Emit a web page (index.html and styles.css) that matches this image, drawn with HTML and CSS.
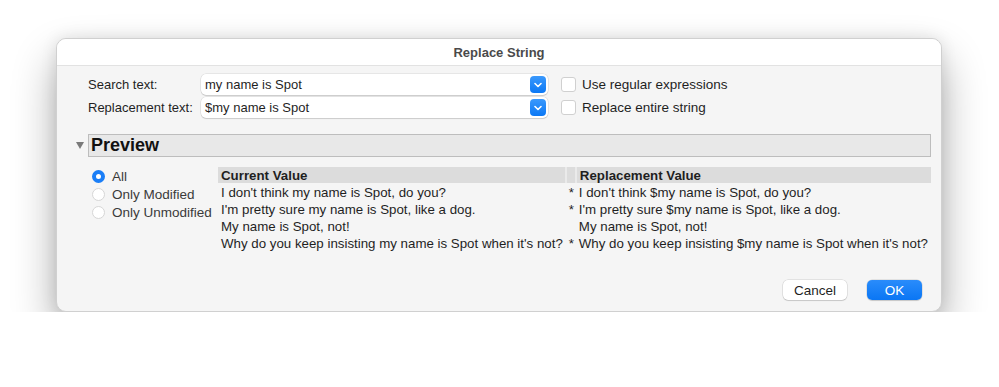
FILE: index.html
```html
<!DOCTYPE html>
<html lang="en">
<head>
    <meta charset="UTF-8">
    <title>Replace String</title>
    <link rel="stylesheet" href="styles.css">
</head>
<body>
    <div class="window">
        <div class="titlebar">Replace String</div>

        <div class="content">
            <div class="fields">
                <div class="field-row">
                    <label class="field-label">Search text:</label>
                    <div class="combo">
                        <span class="combo-text">my name is Spot</span>
                        <span class="combo-btn">
                            <svg width="8" height="6" viewBox="0 0 8 6"><path d="M1 1.5 L4 4.5 L7 1.5" fill="none" stroke="#fff" stroke-width="1.6" stroke-linecap="round" stroke-linejoin="round"/></svg>
                        </span>
                    </div>
                    <div class="check">
                        <span class="check-box"></span>
                        <span>Use regular expressions</span>
                    </div>
                </div>
                <div class="field-row">
                    <label class="field-label">Replacement text:</label>
                    <div class="combo">
                        <span class="combo-text">$my name is Spot</span>
                        <span class="combo-btn">
                            <svg width="8" height="6" viewBox="0 0 8 6"><path d="M1 1.5 L4 4.5 L7 1.5" fill="none" stroke="#fff" stroke-width="1.6" stroke-linecap="round" stroke-linejoin="round"/></svg>
                        </span>
                    </div>
                    <div class="check">
                        <span class="check-box"></span>
                        <span>Replace entire string</span>
                    </div>
                </div>
            </div>

            <div class="section-head">
                <span class="disclosure"></span>
                <div class="section-title">Preview</div>
            </div>

            <div class="preview">
                <div class="filters">
                    <div class="radio-row"><span class="radio selected"></span>All</div>
                    <div class="radio-row"><span class="radio"></span>Only Modified</div>
                    <div class="radio-row"><span class="radio"></span>Only Unmodified</div>
                </div>

                <table class="values">
                    <thead>
                        <tr>
                            <th class="col-current">Current Value</th>
                            <th class="col-mark"></th>
                            <th class="col-new">Replacement Value</th>
                        </tr>
                    </thead>
                    <tbody>
                        <tr>
                            <td>I don't think my name is Spot, do you?</td>
                            <td class="mark">*</td>
                            <td>I don't think $my name is Spot, do you?</td>
                        </tr>
                        <tr>
                            <td>I'm pretty sure my name is Spot, like a dog.</td>
                            <td class="mark">*</td>
                            <td>I'm pretty sure $my name is Spot, like a dog.</td>
                        </tr>
                        <tr>
                            <td>My name is Spot, not!</td>
                            <td class="mark"></td>
                            <td>My name is Spot, not!</td>
                        </tr>
                        <tr>
                            <td>Why do you keep insisting my name is Spot when it's not?</td>
                            <td class="mark">*</td>
                            <td>Why do you keep insisting $my name is Spot when it's not?</td>
                        </tr>
                    </tbody>
                </table>
            </div>

            <div class="buttons">
                <button class="btn">Cancel</button>
                <button class="btn primary">OK</button>
            </div>
        </div>
    </div>
</body>
</html>
```

FILE: styles.css
```css
body {
    margin: 0;
    padding: 38px 0 0 56px;
    background-color: #FFFFFF;
    font-family: "Liberation Sans", Arial, sans-serif;
    font-size: 13px;
    color: #1F1F1F;
}

.window {
    width: 886px;
    height: 274px;
    box-sizing: border-box;
    background-color: #F5F5F5;
    border: 1px solid #D0D0D0;
    border-radius: 10px;
    box-shadow: 0 22px 44px rgba(0, 0, 0, 0.32), 0 0 16px rgba(0, 0, 0, 0.1);
    overflow: hidden;
    display: flex;
    flex-direction: column;
}

.titlebar {
    height: 26px;
    line-height: 27px;
    background-color: #FFFFFF;
    border-bottom: 1px solid #E2E2E2;
    text-align: center;
    font-weight: bold;
    color: #4A4A4A;
}

.content {
    flex: 1;
    display: flex;
    flex-direction: column;
    padding: 8px 10px 11px 19px;
}

.fields {
    display: flex;
    flex-direction: column;
    gap: 2px;
    padding-left: 12px;
}

.field-row {
    display: flex;
    align-items: center;
    height: 21px;
}

.field-label {
    width: 113px;
}

.combo {
    width: 347px;
    height: 21px;
    box-sizing: border-box;
    background-color: #FFFFFF;
    border-radius: 5px;
    box-shadow: 0 0 0 0.5px rgba(0, 0, 0, 0.12), 0 1px 1px rgba(0, 0, 0, 0.12);
    display: flex;
    align-items: center;
    justify-content: space-between;
    padding: 0 2px 0 4px;
}

.combo-btn {
    width: 16px;
    height: 17px;
    background: linear-gradient(#3B99FC, #0B78F5);
    border-radius: 4px;
    display: flex;
    align-items: center;
    justify-content: center;
}

.check {
    display: flex;
    align-items: center;
    gap: 6px;
    margin-left: 13px;
    font-size: 13.5px;
}

.check-box {
    width: 13px;
    height: 13px;
    background-color: #FFFFFF;
    border: 1px solid #D0D0D0;
    border-radius: 3px;
}

.section-head {
    display: flex;
    align-items: center;
    margin-top: 16px;
}

.disclosure {
    width: 0;
    height: 0;
    border-left: 4.5px solid transparent;
    border-right: 4.5px solid transparent;
    border-top: 7px solid #7A7A7A;
    margin-right: 4px;
}

.section-title {
    flex: 1;
    height: 21px;
    line-height: 21px;
    background-color: #E8E8E8;
    border: 1px solid #BDBDBD;
    padding-left: 2px;
    font-size: 18px;
    font-weight: bold;
    color: #111111;
}

.preview {
    display: flex;
    margin-top: 10px;
    padding-left: 16px;
}

.filters {
    flex: 0 0 126px;
    display: flex;
    flex-direction: column;
    gap: 5px;
    padding-top: 3px;
    white-space: nowrap;
}

.radio-row {
    display: flex;
    align-items: center;
    gap: 7px;
    height: 13px;
    font-size: 13.5px;
    color: #3A3A3A;
}

.radio {
    flex: none;
    width: 13px;
    height: 13px;
    box-sizing: border-box;
    border-radius: 50%;
    background-color: #FFFFFF;
    border: 1px solid #D6D6D6;
}

.radio.selected {
    border: 4px solid #1A7EF7;
    background-color: #FFFFFF;
}

.values {
    flex: 1;
    border-collapse: collapse;
    font-size: 13.3px;
}

.values th {
    height: 16px;
    padding: 0 3px;
    background-color: #DCDCDC;
    border-right: 2px solid #EAEAEA;
    text-align: left;
    font-weight: bold;
}

.values th:last-child {
    border-right: none;
}

.values td {
    height: 17px;
    padding: 0 3px;
    line-height: 17px;
    white-space: nowrap;
}

.values tbody tr:first-child td {
    padding-top: 1px;
}

.col-current {
    width: 341px;
}

.col-mark {
    width: 4px;
}

.values td.mark {
    padding: 0 1px 0 2px;
    text-align: center;
}

.buttons {
    margin-top: auto;
    margin-right: 9px;
    display: flex;
    justify-content: flex-end;
    gap: 20px;
}

.btn {
    height: 20px;
    padding: 0 11px;
    font-family: inherit;
    font-size: 13.5px;
    color: #1F1F1F;
    background-color: #FFFFFF;
    border: none;
    border-radius: 5px;
    box-shadow: 0 0 0 0.5px rgba(0, 0, 0, 0.15), 0 1px 1px rgba(0, 0, 0, 0.12);
}

.btn.primary {
    width: 55px;
    color: #FFFFFF;
    background: linear-gradient(#2A8CFB, #0A76F4);
}
```
